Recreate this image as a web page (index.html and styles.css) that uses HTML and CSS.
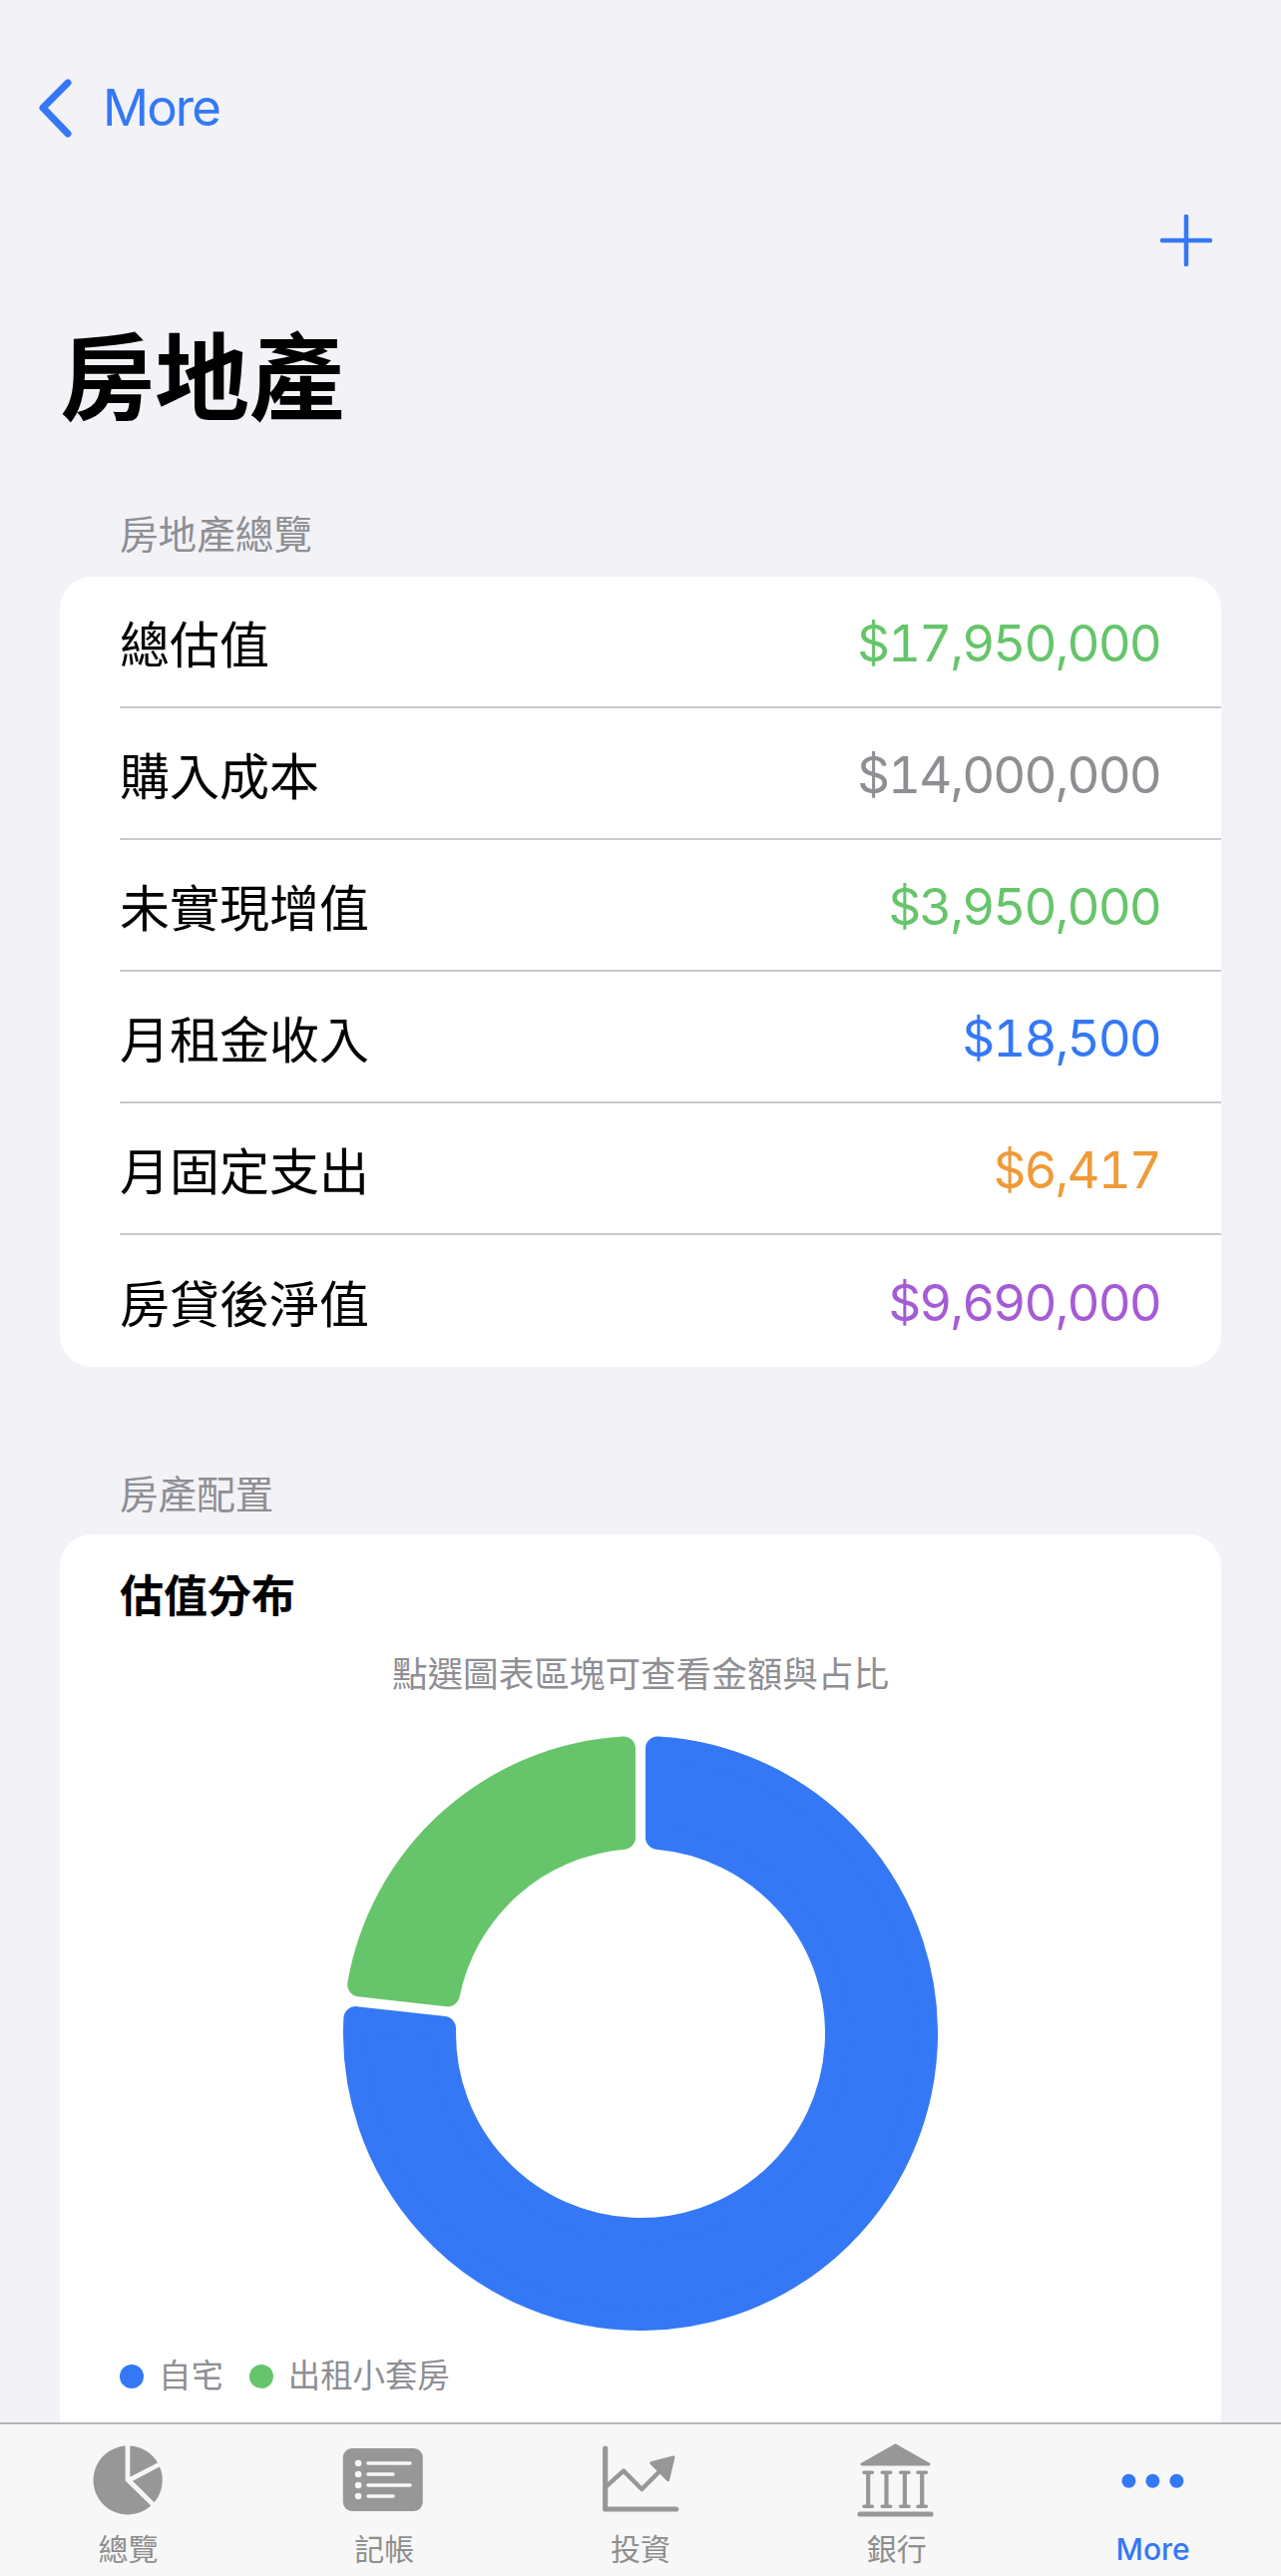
FILE: index.html
```html
<!DOCTYPE html>
<html lang="zh-Hant">
<head>
<meta charset="utf-8">
<title>房地產</title>
<link rel="stylesheet" href="styles.css">
</head>
<body>
<div class="page">
  <nav class="nav-back">
    <svg class="chevron" viewBox="0 0 40 60"><path d="M32 5 L7 30 L32 56"/></svg>
    <span>More</span>
  </nav>
  <div class="nav-add">
    <svg class="plus" viewBox="0 0 52 52"><path d="M26 2 V50 M2 26 H50"/></svg>
  </div>
  <h1 class="title">房地產</h1>

  <h2 class="section-head">房地產總覽</h2>
  <section class="card">
    <div class="row"><span>總估值</span><span class="num green">$17,950,000</span></div>
    <div class="row"><span>購入成本</span><span class="num gray">$14,000,000</span></div>
    <div class="row"><span>未實現增值</span><span class="num green">$3,950,000</span></div>
    <div class="row"><span>月租金收入</span><span class="num blue">$18,500</span></div>
    <div class="row"><span>月固定支出</span><span class="num orange">$6,417</span></div>
    <div class="row"><span>房貸後淨值</span><span class="num purple">$9,690,000</span></div>
  </section>

  <h2 class="section-head section-head-2">房產配置</h2>
  <section class="card chart-card">
    <h3 class="chart-title">估值分布</h3>
    <p class="chart-hint">點選圖表區塊可查看金額與占比</p>
    <svg class="donut" viewBox="-298 -298 596 596">
      <path class="slice-blue" d="M17 -285.49 A286 286 0 1 1 -285.61 -14.93 L-196.94 -4.99 A197 197 0 1 0 17 -196.26 Z"/>
      <path class="slice-green" d="M-17 -285.49 A286 286 0 0 0 -281.82 -48.71 L-193.14 -38.77 A197 197 0 0 1 -17 -196.26 Z"/>
    </svg>
    <ul class="legend">
      <li><i class="dot dot-blue"></i>自宅</li>
      <li><i class="dot dot-green"></i>出租小套房</li>
    </ul>
  </section>

  <footer class="tabbar">
    <div class="tab">
      <svg class="tab-icon" viewBox="0 0 90 84">
        <g transform="translate(45.3 41)">
          <path d="M-2.7 .5 L-2.7 -34.4 A34.5 34.5 0 1 0 23 25.5 Z"/>
          <path d="M2 -3.3 L2 -34.4 A34.5 34.5 0 0 1 29.7 -17.5 Z"/>
          <path d="M4.7 .7 L31.7 -13.6 A34.5 34.5 0 0 1 26.3 22.3 Z"/>
        </g>
      </svg>
      <span>總覽</span>
    </div>
    <div class="tab">
      <svg class="tab-icon" viewBox="0 0 90 84">
        <rect x="3.8" y="9" width="80" height="63" rx="9"/>
        <g class="knock">
          <circle cx="19.1" cy="24" r="3.3"/><circle cx="19.1" cy="35" r="3.3"/>
          <circle cx="19.1" cy="46" r="3.3"/><circle cx="19.1" cy="57" r="3.3"/>
          <path d="M29 24 H71 M29 35 H54 M29 46 H71 M29 57 H54"/>
        </g>
      </svg>
      <span>記帳</span>
    </div>
    <div class="tab">
      <svg class="tab-icon" viewBox="0 0 90 84">
        <path class="line thick" d="M9.7 9 V70 H80.7"/>
        <path class="line" d="M11.3 46.7 L28 31.7 L46.3 50 L66.3 30"/>
        <path class="rounded-fill" d="M78 18 L55.7 23.6 L72.6 40.6 Z"/>
      </svg>
      <span>投資</span>
    </div>
    <div class="tab">
      <svg class="tab-icon" viewBox="0 0 90 84">
        <path class="rounded-fill" d="M43.5 6 L10 25 H77 Z"/>
        <path class="line stem" d="M16.2 34 V67 M34.5 34 V67 M52.9 34 V67 M70.2 34 V67"/>
        <path class="line serif" d="M12 33.3 H20.4 M30.3 33.3 H38.7 M48.7 33.3 H57.1 M66 33.3 H74.4 M12 67.3 H20.4 M30.3 67.3 H38.7 M48.7 67.3 H57.1 M66 67.3 H74.4"/>
        <path class="line thick" d="M8 75 H79"/>
      </svg>
      <span>銀行</span>
    </div>
    <div class="tab tab-active">
      <svg class="tab-icon" viewBox="0 0 90 84">
        <circle cx="20.4" cy="41.7" r="7"/><circle cx="44.4" cy="41.7" r="7"/><circle cx="68.4" cy="41.7" r="7"/>
      </svg>
      <span>More</span>
    </div>
  </footer>
</div>
</body>
</html>
```

FILE: styles.css
```css
* { box-sizing: border-box; }
html, body { margin: 0; padding: 0; }
body {
  background: #f2f2f7;
  color: #000;
  font-family: Inter, "Noto Sans CJK TC", sans-serif;
}
.page {
  position: relative;
  width: 1284px;
  height: 2582px;
  overflow: hidden;
  background: #f2f2f7;
}

/* Navigation */
.nav-back {
  display: flex;
  align-items: center;
  height: 56px;
  margin-top: 80px;
  padding-left: 36px;
  font-size: 51px;
  line-height: 56px;
  letter-spacing: -1.9px;
  color: #3478f6;
}
.chevron { width: 40px; height: 60px; margin-right: 27px; flex: none; }
.chevron path { fill: none; stroke: #3478f6; stroke-width: 7; stroke-linecap: round; stroke-linejoin: round; }
.nav-add {
  display: flex;
  justify-content: flex-end;
  margin-top: 79px;
  padding-right: 69px;
  height: 52px;
}
.plus { width: 52px; height: 52px; }
.plus path { fill: none; stroke: #3478f6; stroke-width: 4.5; stroke-linecap: round; }
.title {
  margin: 58px 0 0;
  padding-left: 60px;
  font-size: 95px;
  line-height: 110px;
  font-weight: 700;
}

/* Sections */
.section-head {
  margin: 76px 0 17px;
  padding-left: 120px;
  font-size: 38.6px;
  line-height: 50px;
  font-weight: 400;
  color: #8e8e93;
}
.section-head-2 { margin: 103px 0 15px; }
.card {
  margin: 0 60px;
  background: #fff;
  border-radius: 32px;
  overflow: hidden;
}
.row {
  display: flex;
  justify-content: space-between;
  align-items: center;
  height: 132px;
  margin-left: 60px;
  padding-right: 61px;
  font-size: 50px;
  border-bottom: 2px solid #c9c9cc;
}
.row:last-child { border-bottom: 0; }
.num {
  padding-top: 3px;
  font-size: 51px;
  font-variant-numeric: tabular-nums;
  letter-spacing: -1.9px;
}
.green { color: #66c56a; }
.gray { color: #8e8e93; }
.blue { color: #3478f6; }
.orange { color: #f09a37; }
.purple { color: #a55bd6; }

/* Chart */
.chart-card { padding: 37px 60px 200px; }
.chart-title {
  margin: 0;
  font-size: 44px;
  line-height: 50px;
  font-weight: 700;
}
.chart-hint {
  margin: 32px 0 0;
  text-align: center;
  font-size: 35.6px;
  line-height: 44px;
  color: #8e8e93;
}
.donut { display: block; width: 596px; height: 596px; margin: 39px auto 0; }
.slice-blue { fill: #3478f6; stroke: #3478f6; stroke-width: 24; stroke-linejoin: round; }
.slice-green { fill: #66c56a; stroke: #66c56a; stroke-width: 24; stroke-linejoin: round; }
.legend {
  display: flex;
  gap: 26px;
  list-style: none;
  margin: 24px 0 0;
  padding: 0;
  font-size: 32.4px;
  line-height: 44px;
  color: #8e8e93;
}
.legend li { display: flex; align-items: center; }
.dot { width: 24px; height: 24px; border-radius: 50%; margin-right: 15px; }
.dot-blue { background: #3478f6; }
.dot-green { background: #66c56a; }

/* Tab bar */
.tabbar {
  position: absolute;
  left: 0;
  right: 0;
  bottom: 0;
  height: 154px;
  display: grid;
  grid-template-columns: repeat(5, 1fr);
  padding-top: 15px;
  background: #f7f7f7;
  border-top: 2px solid #b5b5b7;
}
.tab {
  display: flex;
  flex-direction: column;
  align-items: center;
  font-size: 30px;
  line-height: 36px;
  color: #8e8e8e;
}
.tab-icon { display: block; width: 90px; height: 84px; margin-bottom: 8px; fill: #979797; }
.tab-active { color: #3478f6; font-weight: 500; }
.tab-active .tab-icon { fill: #3478f6; }
.knock { fill: #f7f7f7; stroke: none; }
.knock path { fill: none; stroke: #f7f7f7; stroke-width: 3.5; stroke-linecap: round; }
.line { fill: none; stroke: #979797; stroke-width: 4.5; stroke-linecap: round; stroke-linejoin: round; }
.line.thick { stroke-width: 5.2; }
.line.stem { stroke-width: 4.2; stroke-linecap: butt; }
.line.serif { stroke-width: 3.6; }
.rounded-fill { fill: #979797; stroke: #979797; stroke-width: 3; stroke-linejoin: round; }
```
